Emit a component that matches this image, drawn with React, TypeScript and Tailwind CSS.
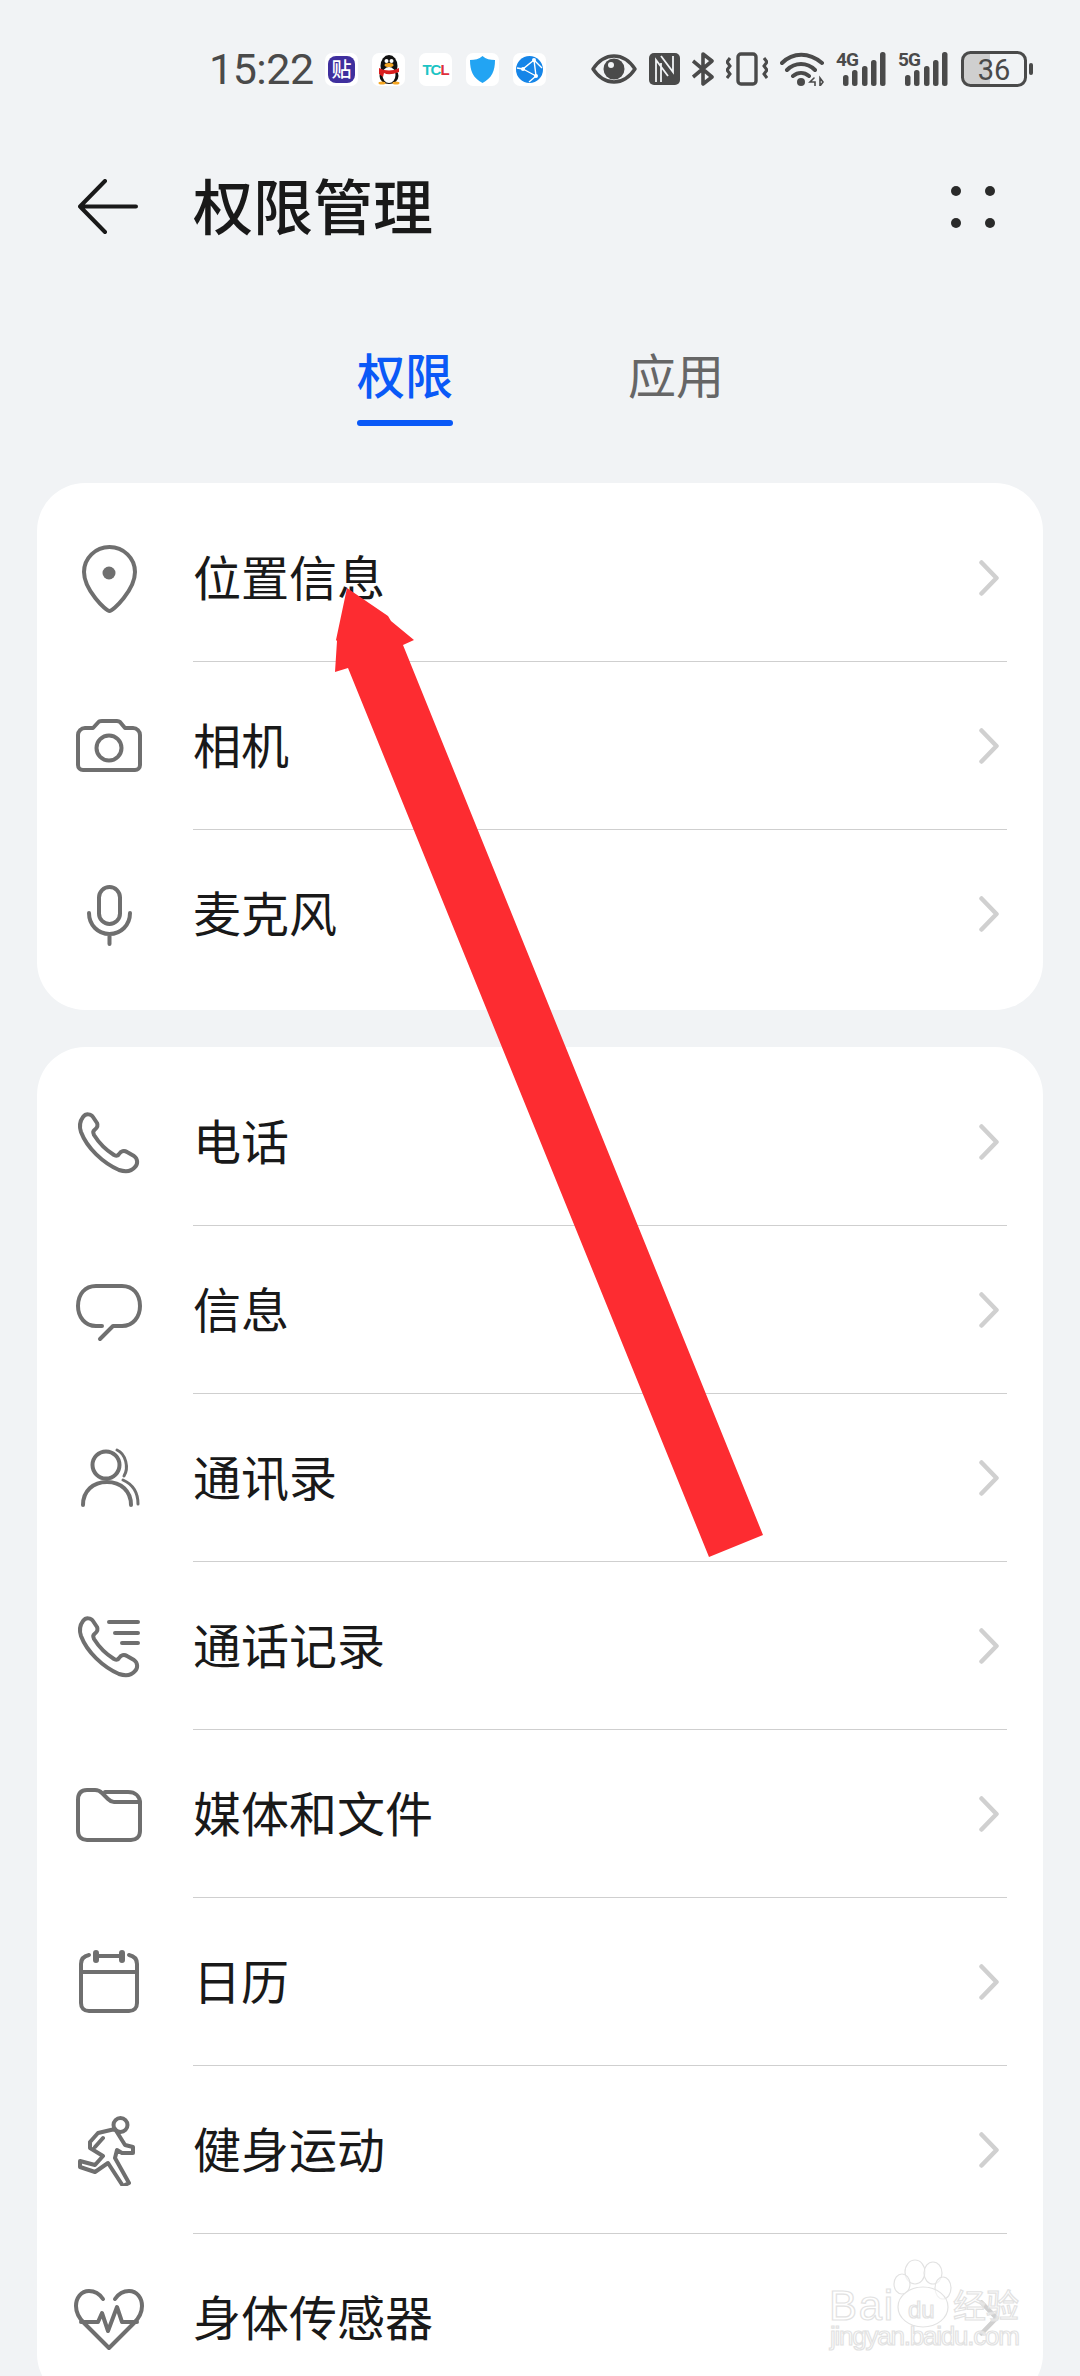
import type { ReactNode } from "react";

const cjk = "font-['Noto_Sans_CJK_SC','Noto_Sans',sans-serif]";

function Glyph({ children }: { children: ReactNode }) {
  return (
    <svg width="72" height="72" viewBox="0 0 72 72" fill="none" stroke="#6f6f6f" strokeWidth="4" strokeLinecap="round" strokeLinejoin="round" className="shrink-0">
      {children}
    </svg>
  );
}

const handset =
  "M10 11 C13 7 18 8 20 11 L24 17 C25.5 20 24 22 21.5 24 C20 25 20 27 21 29 C26 37 33 44 41 49 C43 50 45 50 46 48 C48 45 51 44 54 46 L61 50 C65 53 65 58 62 61 C58 66 52 66 46 64 C30 57 14 42 8 26 C6 20 7 15 10 11Z";

const icons: Record<string, ReactNode> = {
  location: (
    <>
      <path d="M36.5 69 C33 69 11 48 11 30 A25.5 25 0 0 1 62 30 C62 48 40 69 36.5 69Z" />
      <circle cx="36" cy="31" r="6.5" fill="#6f6f6f" stroke="none" />
    </>
  ),
  camera: (
    <>
      <path d="M12 18 H20 L26 11.5 Q27 11 29 11 H44 Q46 11 47 12 L52 18 H60 A7 7 0 0 1 67 25 V55 A5 5 0 0 1 62 60 H10 A5 5 0 0 1 5 55 V25 A7 7 0 0 1 12 18Z" />
      <circle cx="36" cy="38" r="12.5" />
    </>
  ),
  mic: (
    <>
      <rect x="26" y="9" width="21" height="37" rx="10.5" />
      <path d="M16 35 C16 47 25 56 36.5 56 C48 56 57 47 57 35 M36.5 56 V66" />
    </>
  ),
  phone: <path d={handset} />,
  message: <path d="M29 52 H23 C12 52 5 43 5 32 C5 20 12 12 23 12 H49 C60 12 67 20 67 32 C67 43 60 52 49 52 H40 L27 65" />,
  contacts: (
    <>
      <circle cx="33" cy="23" r="13.5" />
      <path d="M10 63 C10 49 20 40 34 40 C48 40 58 49 58 63" />
      <path d="M44 8 C53 12 56 26 51 34 M50 38 C59 42 65 50 65 62" strokeWidth="3" />
    </>
  ),
  calls: (
    <>
      <path d={handset} />
      <path d="M36 12 H65 M42 23 H65 M49 33 H65" />
    </>
  ),
  folder: (
    <>
      <path d="M5 22 C5 15 8 12 14 12 H22 C25 12 27 13 29 15 L35 21 C37 23 38 24 41 24 H67 V53 C67 59 63 62 58 62 H14 C9 62 5 59 5 53 Z" />
      <path d="M32 14 H55 C62 14 67 18 67 25" />
    </>
  ),
  calendar: (
    <>
      <path d="M16 9 C11 10 8 13 8 18 V57 C8 62 11 65 16 65 H56 C61 65 64 62 64 57 V18 C64 13 61 10 56 9 M23 10 H49 M8 26 H64" />
      <path d="M23 7 V14 M49 7 V14" strokeWidth="6" />
    </>
  ),
  run: (
    <>
      <circle cx="47.5" cy="11" r="7" />
      <path d="M25 19 L42 15 L47 23 L52 31 L60 33 L60 39 L49 39 L44 36 L42 44 L56 69 L50 72 L35 49 L22 58 L7 53 L7 47 L22 51 L30 42 L17 34 L17 28 Z M22 33 L30 24" />
    </>
  ),
  heart: (
    <>
      <path d="M30 17 C26 11 20 9 16 9 C8 9 3 16 3 24 C3 31 6 36 11 41 L36 66 L61 41 C66 36 69 31 69 24 C69 16 64 9 56 9 C52 9 46 11 42 17" />
      <path d="M8 40 H25 L29 31 L35 49 L44 25 L49 40 H64" />
    </>
  ),
};

const groupOne = [
  { icon: "location", label: "位置信息" },
  { icon: "camera", label: "相机" },
  { icon: "mic", label: "麦克风" },
];

const groupTwo = [
  { icon: "phone", label: "电话" },
  { icon: "message", label: "信息" },
  { icon: "contacts", label: "通讯录" },
  { icon: "calls", label: "通话记录" },
  { icon: "folder", label: "媒体和文件" },
  { icon: "calendar", label: "日历" },
  { icon: "run", label: "健身运动" },
  { icon: "heart", label: "身体传感器" },
];

function Row({ icon, label, last }: { icon: string; label: string; last?: boolean }) {
  return (
    <div className="flex h-[168px] items-center pl-[36px] pr-[36px]">
      <Glyph>{icons[icon]}</Glyph>
      <div className={`ml-[48px] flex h-full flex-1 items-center justify-between pr-[8px] ${last ? "" : "border-b border-[#cfcfcf]"}`}>
        <span className="pb-[6px] text-[48px] leading-[60px] text-[#191919]">{label}</span>
        <svg width="20" height="36" viewBox="0 0 20 36" fill="none" stroke="#d0d0d0" strokeWidth="4.5" strokeLinecap="round" strokeLinejoin="round">
          <path d="M2.5 2.5 L17.5 18 L2.5 33.5" />
        </svg>
      </div>
    </div>
  );
}

function NotifBox({ children }: { children: ReactNode }) {
  return <div className="flex h-[33px] w-[33px] shrink-0 items-center justify-center overflow-hidden rounded-[7px] bg-white">{children}</div>;
}

function StatusBar() {
  const c = "#4a4a4a";
  return (
    <div className="flex h-[147px] items-center pb-[9px] pl-[209px]">
      <span className="w-[103px] whitespace-nowrap font-['Roboto',sans-serif] text-[43px] leading-none tracking-[-0.5px] text-[#4a4a4a]">15:22</span>
      <div className="ml-[13px] flex items-center gap-[14px]">
        <NotifBox>
          <div className="flex h-[27px] w-[27px] items-center justify-center rounded-[8px] bg-[#3f2f9e] text-[20px] leading-none font-medium text-white">贴</div>
        </NotifBox>
        <NotifBox>
          <svg width="33" height="33" viewBox="0 0 33 33">
            <ellipse cx="17" cy="13" rx="8.5" ry="11" fill="#111" />
            <ellipse cx="17" cy="23" rx="9.5" ry="8" fill="#111" />
            <ellipse cx="17" cy="22" rx="6.5" ry="8" fill="#fff" />
            <circle cx="14.5" cy="8" r="2" fill="#fff" />
            <circle cx="19.5" cy="8" r="2" fill="#fff" />
            <ellipse cx="17" cy="12" rx="4.5" ry="2" fill="#f5a623" />
            <path d="M7 15 Q17 20 27 15 L27 19 Q17 23 12 20 L11 24 L7 21Z" fill="#d81e1e" />
            <ellipse cx="10" cy="30" rx="3.5" ry="1.5" fill="#f5a623" />
            <ellipse cx="24" cy="30" rx="3.5" ry="1.5" fill="#f5a623" />
          </svg>
        </NotifBox>
        <NotifBox>
          <div className="flex font-['Liberation_Sans',sans-serif] text-[15px] leading-none font-bold tracking-[-1px]">
            <span className="text-[#1cc4c4]">T</span>
            <span className="text-[#1cc4c4]">C</span>
            <span className="text-[#e0303c]">L</span>
          </div>
        </NotifBox>
        <NotifBox>
          <svg width="25" height="27" viewBox="0 0 25 27">
            <path d="M12.5 0 C16 3 20 4 25 4 C25 15 22 22 12.5 27 C3 22 0 15 0 4 C5 4 9 3 12.5 0Z" fill="#22a4f3" />
          </svg>
        </NotifBox>
        <NotifBox>
          <svg width="27" height="27" viewBox="0 0 27 27">
            <circle cx="13.5" cy="13.5" r="13.5" fill="#1585e8" />
            <path d="M18 4 L7 13 L20 20 M18 4 L20 20 M7 13 L1 12 M20 20 L13 26 M18 4 L26 12" stroke="#fff" strokeWidth="1.4" fill="none" />
            <circle cx="18" cy="4" r="2" fill="#fff" />
            <circle cx="7" cy="13" r="2" fill="#fff" />
            <circle cx="20" cy="20" r="2" fill="#fff" />
          </svg>
        </NotifBox>
      </div>
      <div className="ml-[45px] flex items-center gap-[12px]">
        <svg width="46" height="30" viewBox="0 0 46 30" className="shrink-0">
          <path d="M2 15 C8 6 15 2 23 2 C31 2 38 6 44 15 C38 24 31 28 23 28 C15 28 8 24 2 15Z" fill="none" stroke={c} strokeWidth="3.4" strokeLinejoin="round" />
          <circle cx="23" cy="15" r="10.5" fill={c} />
          <circle cx="20" cy="11" r="3" fill="#f1f3f5" />
        </svg>
        <svg width="31" height="32" viewBox="0 0 31 32" className="shrink-0">
          <rect x="0" y="0" width="31" height="32" rx="5" fill={c} />
          <path d="M7 29 V7 L19 23 M12 3 L24 19 V3 M12 10 V29" fill="none" stroke="#f1f3f5" strokeWidth="1.8" />
        </svg>
        <svg width="22" height="34" viewBox="0 0 22 34" fill="none" stroke={c} strokeWidth="3.6" strokeLinejoin="round" className="shrink-0">
          <path d="M1 9 L20 25 L11 32 V2 L20 9 L1 25" />
        </svg>
        <svg width="42" height="34" viewBox="0 0 42 34" fill="none" stroke={c} className="shrink-0">
          <rect x="12" y="2" width="18" height="30" rx="3" strokeWidth="3.4" />
          <path d="M4 6 L1 10 L4 14 L1 18 L4 22 L1 26 M38 6 L41 10 L38 14 L41 18 L38 22 L41 26" strokeWidth="3" />
        </svg>
        <svg width="44" height="34" viewBox="0 0 44 34" fill="none" stroke={c} strokeWidth="4" strokeLinecap="round" className="shrink-0">
          <path d="M2 11 C13 0 29 0 42 11 M7 18 C15 10 27 10 35 18 M13 24 C18 20 24 20 29 24" />
          <circle cx="21" cy="30" r="4" fill={c} stroke="none" />
          <path d="M34 26 L30 30 H35 V34 M40 26 V34 L43 30Z" strokeWidth="1.6" />
        </svg>
        {["4G", "5G"].map((net) => (
          <svg key={net} width="50" height="44" viewBox="0 -8 50 44" className="-my-[4px] shrink-0 -translate-y-[4px]">
            <text x="0" y="15" fontFamily="Roboto, sans-serif" fontSize="19" fontWeight="700" fill={c} textLength="23">{net}</text>
            <rect x="7" y="24" width="5.5" height="11" rx="2.5" fill={c} />
            <rect x="16" y="19" width="5.5" height="16" rx="2.5" fill={c} />
            <rect x="26" y="15" width="5.5" height="20" rx="2.5" fill={c} />
            <rect x="35" y="9" width="5.5" height="26" rx="2.5" fill={c} />
            <rect x="44" y="1" width="5.5" height="34" rx="2.5" fill={c} />
          </svg>
        ))}
        <svg width="72" height="36" viewBox="0 0 72 36" className="ml-px shrink-0">
          <path d="M9 2 H29 V34 H9 A7 7 0 0 1 2 27 V9 A7 7 0 0 1 9 2Z" fill="#cfcfcf" />
          <rect x="1.5" y="1.5" width="63" height="33" rx="8" fill="none" stroke={c} strokeWidth="3" />
          <rect x="68" y="12" width="4" height="12" rx="2" fill={c} />
          <text x="33" y="29" textAnchor="middle" fontFamily="Roboto, sans-serif" fontSize="29" fill={c}>36</text>
        </svg>
      </div>
    </div>
  );
}

export default function App() {
  return (
    <div className={`relative h-[2376px] w-[1080px] overflow-hidden bg-[#f1f3f5] ${cjk}`}>
      <StatusBar />

      <div className="flex h-[120px] items-center pl-[78px] pr-[85px]">
        <svg width="60" height="56" viewBox="0 0 60 56" fill="none" stroke="#191919" strokeWidth="4" strokeLinecap="round" strokeLinejoin="round">
          <path d="M58 27.5 H2 M27 2 L2 27.5 L27 53" />
        </svg>
        <h1 className="ml-[55px] flex-1 pb-[6px] text-[60px] leading-[80px] font-medium text-[#191919]">权限管理</h1>
        <div className="grid grid-cols-2 gap-x-[24px] gap-y-[22px]">
          <span className="h-[10px] w-[10px] rounded-full bg-[#2a2a2a]" />
          <span className="h-[10px] w-[10px] rounded-full bg-[#2a2a2a]" />
          <span className="h-[10px] w-[10px] rounded-full bg-[#2a2a2a]" />
          <span className="h-[10px] w-[10px] rounded-full bg-[#2a2a2a]" />
        </div>
      </div>

      <div className="flex h-[216px] gap-[175px] pl-[357px] pt-[76px]">
        <div className="w-[96px]">
          <div className="text-[48px] leading-[60px] font-medium text-[#0a59f7]">权限</div>
          <div className="mt-[17px] h-[6px] rounded-full bg-[#0a59f7]" />
        </div>
        <div className="text-[48px] leading-[60px] text-[#666666]">应用</div>
      </div>

      <div className="mx-[37px] rounded-[48px] bg-white pb-[12px] pt-[11px]">
        {groupOne.map((row, i) => (
          <Row key={row.label} icon={row.icon} label={row.label} last={i === groupOne.length - 1} />
        ))}
      </div>

      <div className="mx-[37px] mt-[37px] rounded-[48px] bg-white pt-[11px]">
        {groupTwo.map((row, i) => (
          <Row key={row.label} icon={row.icon} label={row.label} last={i === groupTwo.length - 1} />
        ))}
      </div>

      {/* annotation and watermark sit on top of the screenshot */}
      <svg width="1080" height="2376" viewBox="0 0 1080 2376" className="pointer-events-none absolute left-0 top-0">
        <polygon points="347,588 388,616 391,621 414,640 403,645 763,1535 709,1557 348,668 335,672 337,641 336,640" fill="#fd2c31" />
        <g fill="#ffffff" fillOpacity="0.55" stroke="#e2e2e2" strokeWidth="1.2">
          <ellipse cx="915" cy="2272" rx="10" ry="12" />
          <ellipse cx="933" cy="2273" rx="9" ry="11" />
          <ellipse cx="902" cy="2284" rx="8" ry="10" />
          <ellipse cx="943" cy="2288" rx="8" ry="11" />
          <ellipse cx="923" cy="2307" rx="25" ry="20" />
          <text x="829" y="2320" fontFamily="Liberation Sans, sans-serif" fontSize="42" textLength="64">Bai</text>
          <text x="908" y="2318" fontFamily="Liberation Sans, sans-serif" fontSize="24">du</text>
          <text x="953" y="2318" fontFamily="Noto Sans CJK SC, sans-serif" fontSize="33">经验</text>
          <text x="830" y="2345" fontFamily="Liberation Sans, sans-serif" fontSize="26" textLength="190">jingyan.baidu.com</text>
        </g>
      </svg>
    </div>
  );
}
